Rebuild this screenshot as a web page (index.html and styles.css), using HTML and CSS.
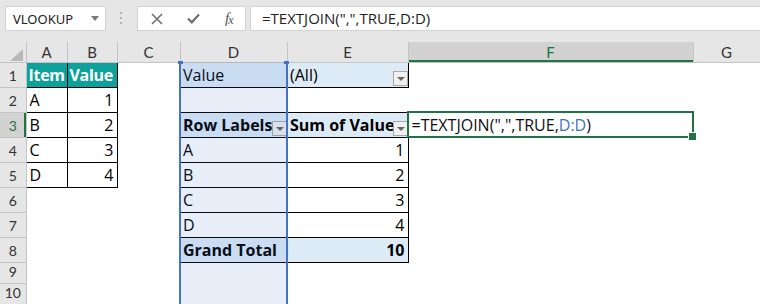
FILE: index.html
```html
<!DOCTYPE html>
<html lang="en">
<head>
    <meta charset="UTF-8">
    <title>TEXTJOIN with pivot table</title>
    <link rel="stylesheet" href="styles.css">
</head>
<body>
    <div class="toolbar">
        <div class="name-box">
            <span>VLOOKUP</span>
            <svg width="8" height="5" viewBox="0 0 8 5"><path d="M0 0h8L4 5z" fill="#7a7a7a"/></svg>
        </div>
        <div class="grip">
            <svg width="3" height="13" viewBox="0 0 3 13"><rect x="0" y="0" width="2" height="2" fill="#b5b5b5"/><rect x="0" y="5" width="2" height="2" fill="#b5b5b5"/><rect x="0" y="10" width="2" height="2" fill="#b5b5b5"/></svg>
        </div>
        <div class="fx-box">
            <svg class="icon-x" width="12" height="12" viewBox="0 0 12 12"><path d="M1 1l10 10M11 1L1 11" stroke="#6f6f6f" stroke-width="1.6" fill="none"/></svg>
            <svg class="icon-ok" width="13" height="11" viewBox="0 0 13 11"><path d="M1 5.5l3.8 3.8L12 1.5" stroke="#6f6f6f" stroke-width="2.2" fill="none"/></svg>
            <span class="fx"><i>f</i><i class="sub">x</i></span>
        </div>
        <div class="formula-bar">=TEXTJOIN(",",TRUE,D:D)</div>
    </div>

    <div class="sheet">
        <table class="grid">
            <colgroup>
                <col style="width:26px">
                <col style="width:41px">
                <col style="width:50px">
                <col style="width:63px">
                <col style="width:107px">
                <col style="width:121px">
                <col style="width:285px">
                <col style="width:67px">
            </colgroup>
            <tr class="hdr-row">
                <th class="corner"><svg width="13" height="12" viewBox="0 0 13 12"><path d="M13 0v12H0z" fill="#b8b8b8"/></svg></th>
                <th class="ch">A</th>
                <th class="ch">B</th>
                <th class="ch">C</th>
                <th class="ch">D</th>
                <th class="ch">E</th>
                <th class="ch ch-active">F</th>
                <th class="ch">G</th>
            </tr>
            <tr>
                <th class="rh">1</th>
                <td class="tb tb-head">Item</td>
                <td class="tb tb-head">Value</td>
                <td></td>
                <td class="pv pv-fill pv-top">Value</td>
                <td class="pv pv-fill pv-top pv-right filter-cell"><div class="filter"><span class="filter-label">(All)</span><span class="dd"></span></div></td>
                <td></td>
                <td></td>
            </tr>
            <tr>
                <th class="rh">2</th>
                <td class="tb">A</td>
                <td class="tb num">1</td>
                <td></td>
                <td></td>
                <td></td>
                <td></td>
                <td></td>
            </tr>
            <tr>
                <th class="rh rh-active">3</th>
                <td class="tb">B</td>
                <td class="tb num">2</td>
                <td></td>
                <td class="pv pv-fill pv-top bold filter-cell"><div class="filter"><span class="filter-label">Row Labels</span><span class="dd"></span></div></td>
                <td class="pv pv-fill pv-top pv-right bold filter-cell"><div class="filter"><span class="filter-label">Sum of Value</span><span class="dd"></span></div></td>
                <td class="active">=TEXTJOIN(",",TRUE,<span class="ref">D:D</span>)</td>
                <td></td>
            </tr>
            <tr>
                <th class="rh">4</th>
                <td class="tb">C</td>
                <td class="tb num">3</td>
                <td></td>
                <td class="pv">A</td>
                <td class="pv pv-right num">1</td>
                <td></td>
                <td></td>
            </tr>
            <tr>
                <th class="rh">5</th>
                <td class="tb">D</td>
                <td class="tb num">4</td>
                <td></td>
                <td class="pv">B</td>
                <td class="pv pv-right num">2</td>
                <td></td>
                <td></td>
            </tr>
            <tr>
                <th class="rh">6</th>
                <td></td>
                <td></td>
                <td></td>
                <td class="pv">C</td>
                <td class="pv pv-right num">3</td>
                <td></td>
                <td></td>
            </tr>
            <tr>
                <th class="rh">7</th>
                <td></td>
                <td></td>
                <td></td>
                <td class="pv">D</td>
                <td class="pv pv-right num">4</td>
                <td></td>
                <td></td>
            </tr>
            <tr>
                <th class="rh">8</th>
                <td></td>
                <td></td>
                <td></td>
                <td class="pv pv-fill bold">Grand Total</td>
                <td class="pv pv-fill pv-right bold num">10</td>
                <td></td>
                <td></td>
            </tr>
            <tr class="short">
                <th class="rh">9</th>
                <td></td>
                <td></td>
                <td></td>
                <td></td>
                <td></td>
                <td></td>
                <td></td>
            </tr>
            <tr class="short">
                <th class="rh">10</th>
                <td></td>
                <td></td>
                <td></td>
                <td></td>
                <td></td>
                <td></td>
                <td></td>
            </tr>
        </table>

        <!-- D:D reference highlight while editing the formula -->
        <div class="ref-range"></div>
    </div>
</body>
</html>
```

FILE: styles.css
```css
* {
    margin: 0;
    padding: 0;
    box-sizing: border-box;
}

body {
    width: 760px;
    height: 304px;
    overflow: hidden;
    background: #fff;
    font-family: 'Open Sans', 'Noto Sans', sans-serif;
    color: #000;
}

/* formula bar */

.toolbar {
    height: 42px;
    background: #e6e6e6;
    display: flex;
    align-items: flex-start;
    padding: 6px 0 0 5px;
}

.name-box {
    width: 101px;
    height: 25px;
    background: #fff;
    border: 1px solid #d2d2d2;
    display: flex;
    align-items: center;
    justify-content: space-between;
    padding: 0 6px 0 7px;
    font-family: 'Noto Sans', sans-serif;
    font-size: 13px;
    color: #222;
}

.grip {
    width: 31px;
    height: 25px;
    display: flex;
    align-items: center;
    justify-content: center;
}

.fx-box {
    width: 109px;
    height: 25px;
    background: #fff;
    border: 1px solid #d2d2d2;
    display: flex;
    align-items: center;
    padding-left: 13px;
}

.icon-ok {
    margin-left: 24px;
}

.fx {
    margin-left: 25px;
    font-family: 'Liberation Serif', serif;
    font-size: 15px;
    color: #555;
    letter-spacing: -1px;
}

.fx .sub {
    font-size: 12px;
    position: relative;
    top: 1px;
}

.formula-bar {
    flex: 1;
    height: 25px;
    margin-left: 4px;
    background: #fff;
    border: 1px solid #d2d2d2;
    border-right: none;
    padding-left: 11px;
    font-size: 15px;
    line-height: 23px;
    color: #222;
}

/* sheet */

.sheet {
    position: relative;
}

.grid {
    width: 760px;
    table-layout: fixed;
    border-collapse: collapse;
}

.grid tr {
    height: 25px;
}

.grid tr.hdr-row {
    height: 20px;
}

.grid tr.short {
    height: 20px;
}

.grid th {
    background: #e6e6e6;
    font-weight: normal;
    color: #333;
}

.corner {
    border-right: 1px solid #c4c4c4;
    border-bottom: 1px solid #c4c4c4;
    text-align: right;
    vertical-align: bottom;
    padding: 0 3px 1px 0;
}

.corner svg {
    display: block;
    margin-left: auto;
}

.ch {
    font-family: Lato, sans-serif;
    font-size: 15px;
    border-right: 1px solid #c4c4c4;
    border-bottom: 1px solid #c4c4c4;
}

.ch-active {
    background: #d2d2d2 !important;
    color: #217346 !important;
    box-shadow: inset 0 -2px #217346;
}

.rh {
    font-family: Lato, sans-serif;
    font-size: 14px;
    border-right: 1px solid #c4c4c4;
    border-bottom: 1px solid #c4c4c4;
    vertical-align: bottom;
    padding-bottom: 3px;
    color: #333 !important;
}

.rh-active {
    background: #d2d2d2 !important;
    color: #217346 !important;
    box-shadow: inset -2px 0 #217346;
}

.grid td {
    font-size: 16px;
    line-height: 20px;
    white-space: nowrap;
    overflow: hidden;
    vertical-align: bottom;
    padding: 0 3px 2px 3px;
}

.grid td.num {
    text-align: right;
}

.bold {
    font-weight: bold;
}

/* source table */

.tb {
    border: 1px solid #000;
}

.tb-head {
    background: #0ea19b;
    color: #fff;
    font-weight: bold;
    padding-left: 2px !important;
    padding-right: 0 !important;
    letter-spacing: -0.3px;
}

/* pivot table */

.pv {
    border-bottom: 1px solid #000;
}

.pv-top {
    border-top: 1px solid #000;
}

.pv-right {
    border-right: 1px solid #000;
}

.pv-fill {
    background: #ddebf7;
}

.grid td.filter-cell {
    padding-right: 0;
    padding-bottom: 1px;
}

.filter {
    display: flex;
    align-items: flex-end;
}

.filter-label {
    flex: 1;
    overflow: hidden;
    white-space: nowrap;
    padding-bottom: 1px;
}

.dd {
    flex-shrink: 0;
    width: 15px;
    height: 15px;
    background: #f0f0f0;
    border: 1px solid #a9a9a9;
    position: relative;
}

.dd::after {
    content: '';
    position: absolute;
    left: 3px;
    top: 5px;
    border-left: 4px solid transparent;
    border-right: 4px solid transparent;
    border-top: 4px solid #666;
}

/* active cell */

.grid td.active {
    position: relative;
    overflow: visible;
    outline: 2px solid #217346;
    outline-offset: -1px;
    color: #111;
}

.grid td.active::after {
    content: '';
    position: absolute;
    right: -4px;
    bottom: -4px;
    width: 7px;
    height: 7px;
    background: #217346;
    border: 1px solid #fff;
}

.ref {
    color: #3e72c9;
}

.ref-range {
    position: absolute;
    left: 179px;
    top: 20px;
    bottom: 0;
    width: 109px;
    border-left: 2px solid #4472c4;
    border-right: 2px solid #4472c4;
    background: rgba(68, 114, 196, 0.12);
    pointer-events: none;
}

.ref-range::before,
.ref-range::after {
    content: '';
    position: absolute;
    top: -1px;
    width: 5px;
    height: 3px;
    background: #4472c4;
}

.ref-range::before {
    left: -3px;
}

.ref-range::after {
    right: -3px;
}
```
